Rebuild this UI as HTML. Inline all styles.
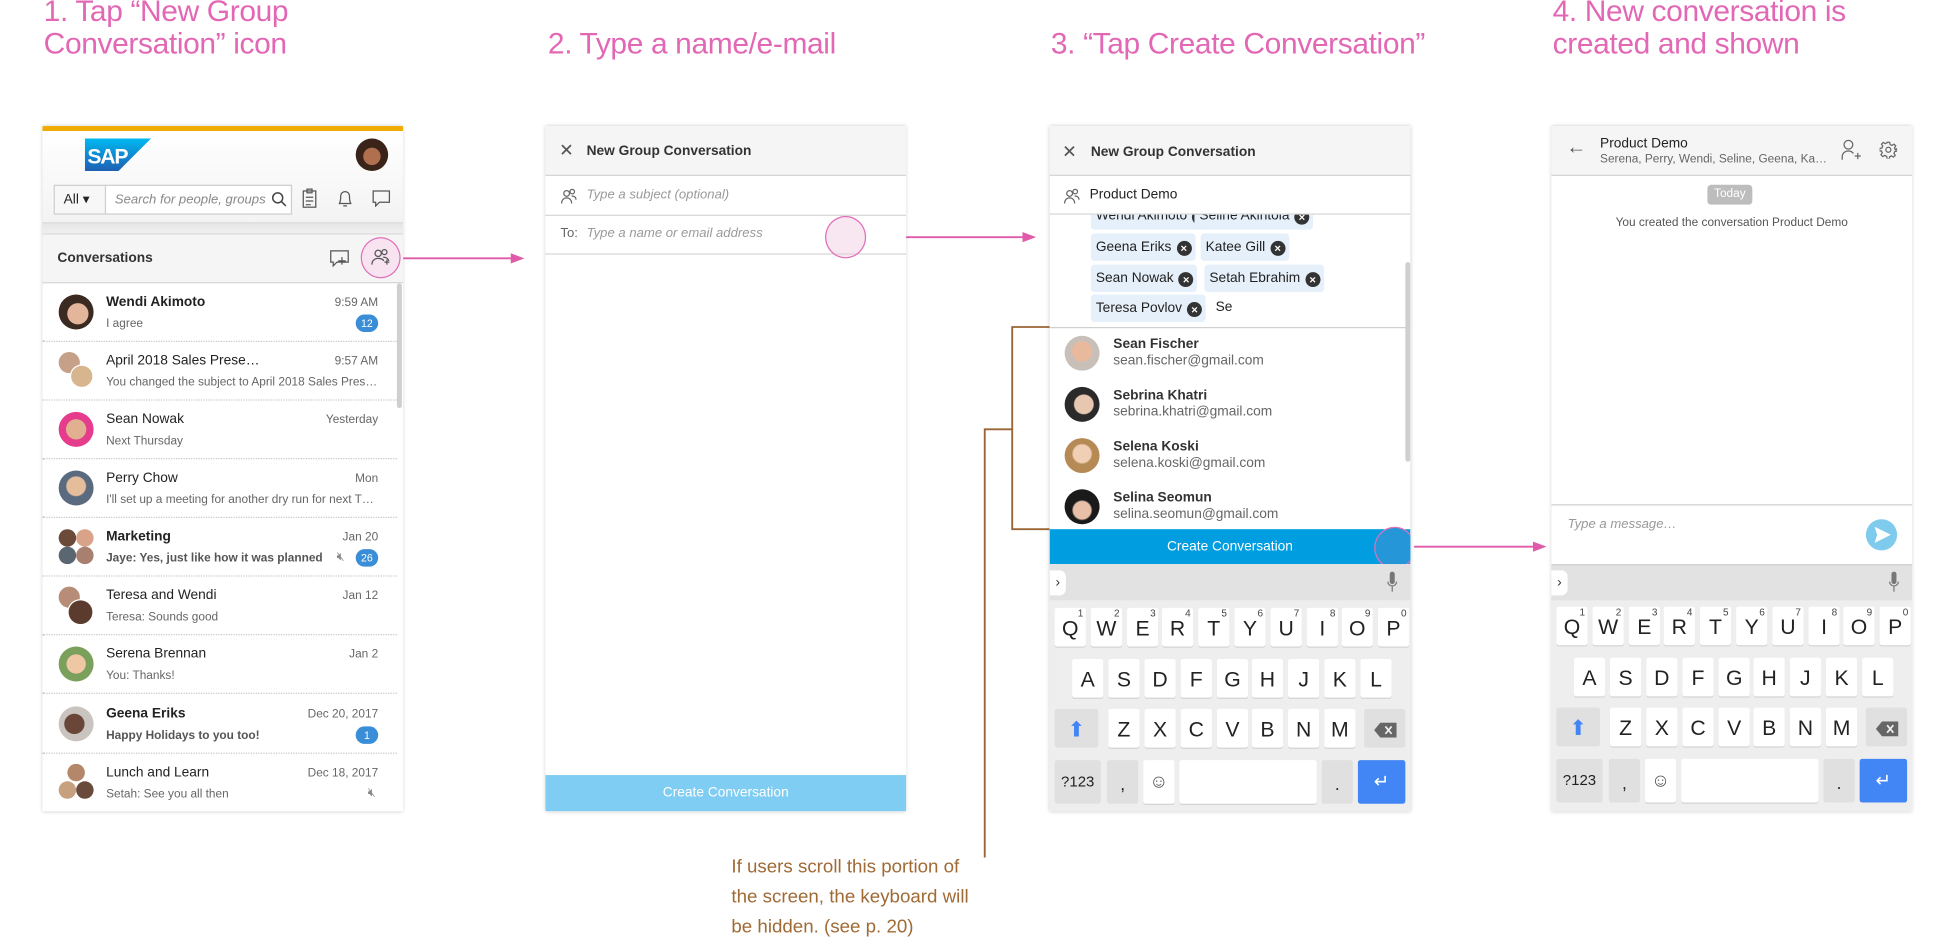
<!DOCTYPE html>
<html><head><meta charset="utf-8">
<style>
*{box-sizing:border-box;margin:0;padding:0}
html,body{width:1957px;height:940px;overflow:hidden;background:#fff}
body{font-family:"Liberation Sans",Arial,sans-serif;color:#333}
#s{position:absolute;left:0;top:0;width:1568px;height:753px;transform:scale(1.24809);transform-origin:0 0}
.a{position:absolute}
.ttl{position:absolute;color:#e267b4;font-size:24px;line-height:26px;font-weight:300;letter-spacing:-0.3px}
.panel{position:absolute;top:101px;width:289px;height:549px;background:#fff;box-shadow:0 0 3px rgba(0,0,0,.22);overflow:hidden}
.av{position:absolute;border-radius:50%}
.item{position:absolute;left:0;width:284px;height:47px;border-bottom:1px dotted #c8c8c8}
.item .n{position:absolute;left:51px;top:9px;font-size:11px;color:#222}
.item .t{position:absolute;right:15px;top:10px;font-size:9.5px;color:#666}
.item .m{position:absolute;left:51px;top:27px;font-size:9.5px;color:#666;white-space:nowrap;max-width:220px;overflow:hidden}
.badge{position:absolute;right:15px;top:25px;height:14px;min-width:18px;padding:0 4px;border-radius:7px;background:#3a8ed8;color:#fff;font-size:8.5px;line-height:14px;text-align:center}
.hdr{position:absolute;left:0;top:0;width:289px;height:40px;background:#f5f5f5;border-bottom:1px solid #d6d6d6}
.row{position:absolute;left:0;width:289px;border-bottom:1px solid #d6d6d6}
.kb{position:absolute;left:0;top:351px;width:289px;height:198px;background:#eeeeee}
.kb .bar{position:absolute;left:0;top:0;width:289px;height:29px;background:#e2e2e2}
.k{position:absolute;width:25px;height:31px;background:#fff;border-radius:2px;box-shadow:0 1px 0 #d4d4d4;font-size:17px;line-height:33px;text-align:center;color:#222}
.k sup{position:absolute;right:2px;top:-12px;font-size:8px;color:#444}
.g{background:#e0e0e0;box-shadow:none}
.tok{position:absolute;height:22px;background:#e6f0fa;border-radius:3px;font-size:11px;line-height:22px;padding-left:4px;color:#222;white-space:nowrap}
.x{display:inline-block;width:12px;height:12px;border-radius:50%;background:#333;color:#fff;font-size:9px;line-height:12px;text-align:center;font-weight:bold;margin-left:4px;vertical-align:-1px}
.sug .nm{position:absolute;left:51px;font-size:11px;font-weight:bold;color:#333}
.sug .em{position:absolute;left:51px;font-size:11px;color:#666}
</style></head><body><div id="s">

<div class="ttl" style="left:35px;top:-3px">1. Tap “New Group<br>Conversation” icon</div>
<div class="ttl" style="left:439px;top:23px">2. Type a name/e-mail</div>
<div class="ttl" style="left:842px;top:23px">3. “Tap Create Conversation”</div>
<div class="ttl" style="left:1244px;top:-3px">4. New conversation is<br>created and shown</div>

<!-- PANEL 1 -->
<div class="panel" style="left:34px">
  <div class="a" style="left:0;top:0;width:289px;height:4px;background:#f0ab00"></div>
  <div class="a" style="left:0;top:4px;width:289px;height:73px;background:linear-gradient(#fff,#f3f3f3)"></div>
  <svg class="a" style="left:34px;top:10px" width="53" height="26" viewBox="0 0 53 26"><defs><linearGradient id="sg" x1="0" y1="0" x2="0" y2="1"><stop offset="0" stop-color="#00b8f1"/><stop offset="1" stop-color="#1e5fb3"/></linearGradient></defs><path d="M0 0H53L27 26H0Z" fill="url(#sg)"/><text x="2" y="20" font-family="Liberation Sans" font-weight="bold" font-size="17" fill="#fff" letter-spacing="-1">SAP</text></svg>
  <div class="av" style="left:251px;top:10px;width:26px;height:26px;background:radial-gradient(circle at 50% 55%,#b07050 35%,#3a2318 37%)"></div>
  <div class="a" style="left:9px;top:47px;width:191px;height:24px;border:1px solid #cfcfcf;background:#f7f7f7"></div>
  <div class="a" style="left:17px;top:52px;font-size:11px;color:#222">All ▾</div>
  <div class="a" style="left:50px;top:47px;width:150px;height:24px;border:1px solid #cfcfcf;background:#fff"></div>
  <div class="a" style="left:58px;top:53px;font-size:10.5px;color:#888;font-style:italic;white-space:nowrap;width:122px;overflow:hidden">Search for people, groups</div>
  <svg class="a" style="left:183px;top:52px" width="13" height="13" viewBox="0 0 13 13" fill="none" stroke="#444" stroke-width="1.2"><circle cx="5.5" cy="5.5" r="4"/><path d="M8.5 8.5L12 12"/></svg>
  <svg class="a" style="left:208px;top:50px" width="12" height="16" viewBox="0 0 12 16" fill="none" stroke="#555" stroke-width="1"><rect x="1" y="2" width="10" height="13"/><rect x="4" y="0.5" width="4" height="3"/><path d="M3 7h6M3 10h6M3 13h4"/></svg>
  <svg class="a" style="left:236px;top:50px" width="13" height="16" viewBox="0 0 13 16" fill="none" stroke="#555" stroke-width="1"><path d="M2 12C3 10 3 8 3 6a3.5 3.5 0 017 0c0 2 0 4 1 6z M5 14h3"/></svg>
  <svg class="a" style="left:264px;top:51px" width="15" height="14" viewBox="0 0 15 14" fill="none" stroke="#555" stroke-width="1"><path d="M1 1h13v9H6l-3 3v-3H1z"/></svg>
  <div class="a" style="left:0;top:77px;width:289px;height:10px;background:linear-gradient(#e6e6e6,#f0f0f0);border-top:1px solid #d8d8d8;border-bottom:1px solid #d8d8d8"></div>
  <div class="a" style="left:0;top:87px;width:289px;height:39px;background:#f5f5f5;border-bottom:1px solid #d6d6d6"></div>
  <div class="a" style="left:12px;top:100px;font-size:11px;font-weight:bold;color:#333">Conversations</div>
  <svg class="a" style="left:230px;top:99px" width="16" height="15" viewBox="0 0 16 15" fill="none" stroke="#555" stroke-width="1"><path d="M1 1h14v9H6l-3 3v-3H1z M10 6v6M7 9h6"/></svg>
  <div class="a" style="left:255px;top:89px;width:32px;height:33px;border-radius:50%;background:#f8e3f1;border:1px solid #e070b8"></div>
  <svg class="a" style="left:263px;top:97px" width="16" height="16" viewBox="0 0 16 16" fill="none" stroke="#555" stroke-width="1"><circle cx="6" cy="5" r="2.5"/><circle cx="11" cy="4" r="2"/><path d="M1 14c0-3 2-5 5-5s4 1 4.5 2M10 8c2 0 4 1 4.5 3M11 12h4M13 10v4"/></svg>
  <div class="a" style="left:284px;top:126px;width:4px;height:100px;background:#cfcfcf;border-radius:2px"></div>

  <div class="item" style="top:126px"><div class="av" style="left:13px;top:9px;width:28px;height:28px;background:radial-gradient(circle at 55% 55%,#e3b59a 38%,#3b2a22 40%)"></div><div class="n" style="font-weight:bold">Wendi Akimoto</div><div class="t">9:59 AM</div><div class="m">I agree</div><div class="badge">12</div></div>
  <div class="item" style="top:173px"><div class="av" style="left:13px;top:8px;width:17px;height:17px;background:#c7a08a"></div><div class="av" style="left:22px;top:18px;width:19px;height:19px;background:#d6b58f;border:1px solid #fff"></div><div class="n">April 2018 Sales Prese…</div><div class="t">9:57 AM</div><div class="m">You changed the subject to April 2018 Sales Pres…</div></div>
  <div class="item" style="top:220px"><div class="av" style="left:13px;top:9px;width:28px;height:28px;background:radial-gradient(circle at 50% 50%,#e0b090 40%,#e63c8c 42%)"></div><div class="n">Sean Nowak</div><div class="t">Yesterday</div><div class="m">Next Thursday</div></div>
  <div class="item" style="top:267px"><div class="av" style="left:13px;top:9px;width:28px;height:28px;background:radial-gradient(circle at 50% 45%,#e4bd9b 36%,#5a6b80 40%)"></div><div class="n">Perry Chow</div><div class="t">Mon</div><div class="m">I'll set up a meeting for another dry run for next T…</div></div>
  <div class="item" style="top:314px"><div class="av" style="left:13px;top:9px;width:14px;height:14px;background:#6b4a3a"></div><div class="av" style="left:27px;top:9px;width:14px;height:14px;background:#d9a38a"></div><div class="av" style="left:13px;top:23px;width:14px;height:14px;background:#5a6670"></div><div class="av" style="left:27px;top:23px;width:14px;height:14px;background:#a88070"></div><div class="n" style="font-weight:bold">Marketing</div><div class="t">Jan 20</div><div class="m" style="font-weight:bold;color:#555">Jaye: Yes, just like how it was planned</div><div class="a" style="right:42px;top:26px;font-size:10px;color:#888">🔇︎</div><div class="badge">26</div></div>
  <div class="item" style="top:361px"><div class="av" style="left:13px;top:8px;width:17px;height:17px;background:#b88d78"></div><div class="av" style="left:20px;top:18px;width:21px;height:21px;background:#5a3b2e;border:1px solid #fff"></div><div class="n">Teresa and Wendi</div><div class="t">Jan 12</div><div class="m">Teresa: Sounds good</div></div>
  <div class="item" style="top:408px"><div class="av" style="left:13px;top:9px;width:28px;height:28px;background:radial-gradient(circle at 50% 50%,#f0c7a5 38%,#7aa05c 40%)"></div><div class="n">Serena Brennan</div><div class="t">Jan 2</div><div class="m">You: Thanks!</div></div>
  <div class="item" style="top:456px"><div class="av" style="left:13px;top:9px;width:28px;height:28px;background:radial-gradient(circle at 45% 50%,#6a4638 38%,#c9c4c0 40%)"></div><div class="n" style="font-weight:bold">Geena Eriks</div><div class="t">Dec 20, 2017</div><div class="m" style="font-weight:bold;color:#555">Happy Holidays to you too!</div><div class="badge">1</div></div>
  <div class="item" style="top:503px;border:none"><div class="av" style="left:20px;top:8px;width:14px;height:14px;background:#b5876a"></div><div class="av" style="left:13px;top:22px;width:14px;height:14px;background:#c7a080"></div><div class="av" style="left:27px;top:22px;width:14px;height:14px;background:#6a4a3a"></div><div class="n">Lunch and Learn</div><div class="t">Dec 18, 2017</div><div class="m">Setah: See you all then</div><div class="a" style="right:17px;top:26px;font-size:10px;color:#888">🔇︎</div></div>
</div>

<!-- arrows -->
<svg class="a" style="left:0;top:0" width="1568" height="753">
  <g stroke="#e05aaa" stroke-width="1.5" fill="#e05aaa">
    <line x1="323" y1="207" x2="413" y2="207"/><path d="M418 207l-8-3v6z"/>
    <line x1="695" y1="190" x2="823" y2="190"/><path d="M828 190l-8-3v6z"/>
    <line x1="1133" y1="438" x2="1232" y2="438"/><path d="M1237 438l-8-3v6z"/>
  </g>
  <g stroke="#9b6535" stroke-width="1.5" fill="none">
    <path d="M841 262H811V424H841"/>
    <path d="M811 344H789V687"/>
  </g>
</svg>

<!-- PANEL 2 -->
<div class="panel" style="left:437px">
  <div class="hdr"></div>
  <div class="a" style="left:11px;top:11px;font-size:14px;color:#555">✕</div>
  <div class="a" style="left:33px;top:14px;font-size:11px;font-weight:bold;color:#333">New Group Conversation</div>
  <div class="row" style="top:40px;height:32px"></div>
  <svg class="a" style="left:12px;top:49px" width="13" height="14" viewBox="0 0 13 14" fill="none" stroke="#666" stroke-width="1"><circle cx="5" cy="5" r="2.3"/><circle cx="9.5" cy="3.5" r="1.8"/><path d="M1 13c0-3 2-4.5 4-4.5s4 1.5 4 4.5M9 7c2 0 3.5 1 3.5 3"/></svg>
  <div class="a" style="left:33px;top:49px;font-size:10.5px;color:#999;font-style:italic">Type a subject (optional)</div>
  <div class="row" style="top:72px;height:31px"></div>
  <div class="a" style="left:12px;top:80px;font-size:10.5px;color:#666">To:</div>
  <div class="a" style="left:33px;top:80px;font-size:10.5px;color:#999;font-style:italic">Type a name or email address</div>
  <div class="a" style="left:224px;top:72px;width:33px;height:34px;border-radius:50%;background:rgba(240,200,225,.45);border:1px solid #e070b8"></div>
  <div class="a" style="left:0;top:520px;width:289px;height:29px;background:#7fcdf2;color:#fff;font-size:11px;line-height:29px;text-align:center">Create Conversation</div>
</div>

<!-- PANEL 3 -->
<div class="panel" style="left:841px">
  <div class="hdr"></div>
  <div class="a" style="left:10px;top:12px;font-size:14px;color:#555">✕</div>
  <div class="a" style="left:33px;top:15px;font-size:11px;font-weight:bold;color:#333">New Group Conversation</div>
  <div class="row" style="top:40px;height:31px"></div>
  <svg class="a" style="left:11px;top:49px" width="13" height="14" viewBox="0 0 13 14" fill="none" stroke="#666" stroke-width="1"><circle cx="5" cy="5" r="2.3"/><circle cx="9.5" cy="3.5" r="1.8"/><path d="M1 13c0-3 2-4.5 4-4.5s4 1.5 4 4.5M9 7c2 0 3.5 1 3.5 3"/></svg>
  <div class="a" style="left:32px;top:49px;font-size:11px;color:#222">Product Demo</div>
  <div class="a" style="left:0;top:71px;width:289px;height:90px;overflow:hidden">
    <div class="tok" style="left:33px;top:-10px">Wendi Akimoto<span class="x">×</span>&nbsp;</div>
    <div class="tok" style="left:116px;top:-10px">Seline Akintola<span class="x">×</span>&nbsp;</div>
    <div class="tok" style="left:33px;top:15px">Geena Eriks<span class="x">×</span>&nbsp;</div>
    <div class="tok" style="left:121px;top:15px">Katee Gill<span class="x">×</span>&nbsp;</div>
    <div class="tok" style="left:33px;top:40px">Sean Nowak<span class="x">×</span>&nbsp;</div>
    <div class="tok" style="left:124px;top:40px">Setah Ebrahim<span class="x">×</span>&nbsp;</div>
    <div class="tok" style="left:33px;top:64px">Teresa Povlov<span class="x">×</span>&nbsp;</div>
    <div class="a" style="left:133px;top:68px;font-size:11px;color:#222">Se</div>
  </div>
  <div class="a" style="left:285px;top:109px;width:4px;height:160px;background:#cfcfcf;border-radius:2px"></div>
  <div class="a" style="left:0;top:161px;width:289px;height:1px;background:#d0d0d0"></div>
  <div class="sug">
    <div class="av" style="left:12px;top:168px;width:28px;height:28px;background:radial-gradient(circle at 50% 45%,#e8b99c 38%,#c8c0b8 40%)"></div>
    <div class="nm" style="top:169px">Sean Fischer</div><div class="em" style="top:182px">sean.fischer@gmail.com</div>
    <div class="av" style="left:12px;top:209px;width:28px;height:28px;background:radial-gradient(circle at 55% 50%,#e8c7b0 36%,#2a2a2a 40%)"></div>
    <div class="nm" style="top:210px">Sebrina Khatri</div><div class="em" style="top:223px">sebrina.khatri@gmail.com</div>
    <div class="av" style="left:12px;top:250px;width:28px;height:28px;background:radial-gradient(circle at 50% 45%,#f0cfb5 34%,#b58a55 40%)"></div>
    <div class="nm" style="top:251px">Selena Koski</div><div class="em" style="top:264px">selena.koski@gmail.com</div>
    <div class="av" style="left:12px;top:291px;width:28px;height:28px;background:radial-gradient(circle at 50% 60%,#e8c0a8 32%,#1a1a1a 38%)"></div>
    <div class="nm" style="top:292px">Selina Seomun</div><div class="em" style="top:305px">selina.seomun@gmail.com</div>
  </div>
  <div class="a" style="left:0;top:323px;width:289px;height:28px;background:#009de0;color:#fff;font-size:11px;line-height:28px;text-align:center">Create Conversation</div>
  <div class="a" style="left:260px;top:321px;width:33px;height:34px;border-radius:50%;background:#2596d8;border:1px solid #e070b8"></div>
  <div class="kb">
    <div class="bar"></div>
    <div class="a" style="left:0;top:5px;width:13px;height:20px;background:#fff;border-radius:0 5px 5px 0;font-size:11px;line-height:20px;text-align:center;color:#333">›</div>
    <svg class="a" style="left:270px;top:6px" width="9" height="17" viewBox="0 0 9 17"><rect x="2.5" y="0" width="4" height="10" rx="2" fill="#777"/><path d="M1 8a3.5 3.5 0 007 0M4.5 12v4" stroke="#777" fill="none"/></svg>
    <div class="k" style="left:4px;top:35px">Q<sup>1</sup></div><div class="k" style="left:33px;top:35px">W<sup>2</sup></div><div class="k" style="left:62px;top:35px">E<sup>3</sup></div><div class="k" style="left:90px;top:35px">R<sup>4</sup></div><div class="k" style="left:119px;top:35px">T<sup>5</sup></div><div class="k" style="left:148px;top:35px">Y<sup>6</sup></div><div class="k" style="left:177px;top:35px">U<sup>7</sup></div><div class="k" style="left:206px;top:35px">I<sup>8</sup></div><div class="k" style="left:234px;top:35px">O<sup>9</sup></div><div class="k" style="left:263px;top:35px">P<sup>0</sup></div>
    <div class="k" style="left:18px;top:76px">A</div><div class="k" style="left:47px;top:76px">S</div><div class="k" style="left:76px;top:76px">D</div><div class="k" style="left:105px;top:76px">F</div><div class="k" style="left:134px;top:76px">G</div><div class="k" style="left:162px;top:76px">H</div><div class="k" style="left:191px;top:76px">J</div><div class="k" style="left:220px;top:76px">K</div><div class="k" style="left:249px;top:76px">L</div>
    <div class="k g" style="left:4px;top:116px;width:35px;color:#4285f4">⬆</div>
    <div class="k" style="left:47px;top:116px">Z</div><div class="k" style="left:76px;top:116px">X</div><div class="k" style="left:105px;top:116px">C</div><div class="k" style="left:134px;top:116px">V</div><div class="k" style="left:162px;top:116px">B</div><div class="k" style="left:191px;top:116px">N</div><div class="k" style="left:220px;top:116px">M</div>
    <div class="k g" style="left:252px;top:116px;width:33px"><svg width="18" height="12" viewBox="0 0 18 12" style="vertical-align:-1px"><path d="M5 0H18V12H5L0 6Z" fill="#666"/><path d="M9 3l5 6M14 3l-5 6" stroke="#eee" stroke-width="1.4"/></svg></div>
    <div class="k g" style="left:4px;top:157px;width:37px;height:35px;font-size:12px;line-height:35px">?123</div>
    <div class="k g" style="left:46px;top:157px;height:35px;font-size:14px;line-height:38px">,</div>
    <div class="k" style="left:75px;top:157px;height:35px;font-size:15px;line-height:35px;color:#555">☺</div>
    <div class="k" style="left:104px;top:157px;width:110px;height:35px"></div>
    <div class="k g" style="left:218px;top:157px;height:35px;font-size:14px;line-height:38px">.</div>
    <div class="k" style="left:247px;top:157px;width:38px;height:35px;background:#4285f4;color:#fff;font-size:15px;line-height:35px;box-shadow:none">↵</div>
  </div>
</div>

<!-- PANEL 4 -->
<div class="panel" style="left:1243px">
  <div class="hdr"></div>
  <div class="a" style="left:12px;top:9px;font-size:16px;color:#555">←</div>
  <div class="a" style="left:39px;top:8px;font-size:11px;color:#222">Product Demo</div>
  <div class="a" style="left:39px;top:21px;font-size:9.5px;color:#666">Serena, Perry, Wendi, Seline, Geena, Ka…</div>
  <svg class="a" style="left:232px;top:10px" width="16" height="18" viewBox="0 0 16 18" fill="none" stroke="#666" stroke-width="1"><circle cx="6" cy="5" r="3.5"/><path d="M1 17v-2c0-3 2-5 5-5 2 0 3 .7 4 2M11 14h5M13.5 11.5v5"/></svg>
  <svg class="a" style="left:263px;top:12px" width="14" height="14" viewBox="0 0 14 14" fill="none" stroke="#666" stroke-width="1"><circle cx="7" cy="7" r="2"/><path d="M6 1h2l.4 1.8 1.5.7 1.6-1 1.4 1.4-1 1.6.7 1.5L14 6v2l-1.8.4-.7 1.5 1 1.6-1.4 1.4-1.6-1-1.5.7L8 14H6l-.4-1.8-1.5-.7-1.6 1L1.1 11l1-1.6-.7-1.5L0 8V6l1.8-.4.7-1.5-1-1.6L2.9 1.1l1.6 1 1.5-.7z"/></svg>
  <div class="a" style="left:125px;top:47px;width:36px;height:16px;background:#bdbdbd;border-radius:3px;color:#fff;font-size:9.5px;line-height:16px;text-align:center">Today</div>
  <div class="a" style="left:0;top:72px;width:289px;text-align:center;font-size:9.5px;color:#555">You created the conversation Product Demo</div>
  <div class="a" style="left:0;top:303px;width:289px;height:1px;background:#cfcfcf"></div>
  <div class="a" style="left:13px;top:313px;font-size:10.5px;color:#999;font-style:italic">Type a message…</div>
  <div class="a" style="left:252px;top:315px;width:25px;height:25px;border-radius:50%;background:#7fcbee"></div>
  <svg class="a" style="left:258px;top:321px" width="14" height="13" viewBox="0 0 14 13"><path d="M1 0L14 6.5 1 13 3 6.5Z" fill="#fff"/></svg>
  <div class="kb">
    <div class="bar" style="border-top:1px solid #cfcfcf"></div>
    <div class="a" style="left:0;top:5px;width:13px;height:20px;background:#fff;border-radius:0 5px 5px 0;font-size:11px;line-height:20px;text-align:center;color:#333">›</div>
    <svg class="a" style="left:270px;top:6px" width="9" height="17" viewBox="0 0 9 17"><rect x="2.5" y="0" width="4" height="10" rx="2" fill="#777"/><path d="M1 8a3.5 3.5 0 007 0M4.5 12v4" stroke="#777" fill="none"/></svg>
    <div class="k" style="left:4px;top:34px">Q<sup>1</sup></div><div class="k" style="left:33px;top:34px">W<sup>2</sup></div><div class="k" style="left:62px;top:34px">E<sup>3</sup></div><div class="k" style="left:90px;top:34px">R<sup>4</sup></div><div class="k" style="left:119px;top:34px">T<sup>5</sup></div><div class="k" style="left:148px;top:34px">Y<sup>6</sup></div><div class="k" style="left:177px;top:34px">U<sup>7</sup></div><div class="k" style="left:206px;top:34px">I<sup>8</sup></div><div class="k" style="left:234px;top:34px">O<sup>9</sup></div><div class="k" style="left:263px;top:34px">P<sup>0</sup></div>
    <div class="k" style="left:18px;top:75px">A</div><div class="k" style="left:47px;top:75px">S</div><div class="k" style="left:76px;top:75px">D</div><div class="k" style="left:105px;top:75px">F</div><div class="k" style="left:134px;top:75px">G</div><div class="k" style="left:162px;top:75px">H</div><div class="k" style="left:191px;top:75px">J</div><div class="k" style="left:220px;top:75px">K</div><div class="k" style="left:249px;top:75px">L</div>
    <div class="k g" style="left:4px;top:115px;width:35px;color:#4285f4">⬆</div>
    <div class="k" style="left:47px;top:115px">Z</div><div class="k" style="left:76px;top:115px">X</div><div class="k" style="left:105px;top:115px">C</div><div class="k" style="left:134px;top:115px">V</div><div class="k" style="left:162px;top:115px">B</div><div class="k" style="left:191px;top:115px">N</div><div class="k" style="left:220px;top:115px">M</div>
    <div class="k g" style="left:252px;top:115px;width:33px"><svg width="18" height="12" viewBox="0 0 18 12" style="vertical-align:-1px"><path d="M5 0H18V12H5L0 6Z" fill="#666"/><path d="M9 3l5 6M14 3l-5 6" stroke="#eee" stroke-width="1.4"/></svg></div>
    <div class="k g" style="left:4px;top:156px;width:37px;height:35px;font-size:12px;line-height:35px">?123</div>
    <div class="k g" style="left:46px;top:156px;height:35px;font-size:14px;line-height:38px">,</div>
    <div class="k" style="left:75px;top:156px;height:35px;font-size:15px;line-height:35px;color:#555">☺</div>
    <div class="k" style="left:104px;top:156px;width:110px;height:35px"></div>
    <div class="k g" style="left:218px;top:156px;height:35px;font-size:14px;line-height:38px">.</div>
    <div class="k" style="left:247px;top:156px;width:38px;height:35px;background:#4285f4;color:#fff;font-size:15px;line-height:35px;box-shadow:none">↵</div>
  </div>
</div>

<div class="a" style="left:586px;top:683px;font-size:15px;line-height:24px;color:#a06a35">If users scroll this portion of<br>the screen, the keyboard will<br>be hidden. (see p. 20)</div>

</div></body></html>
